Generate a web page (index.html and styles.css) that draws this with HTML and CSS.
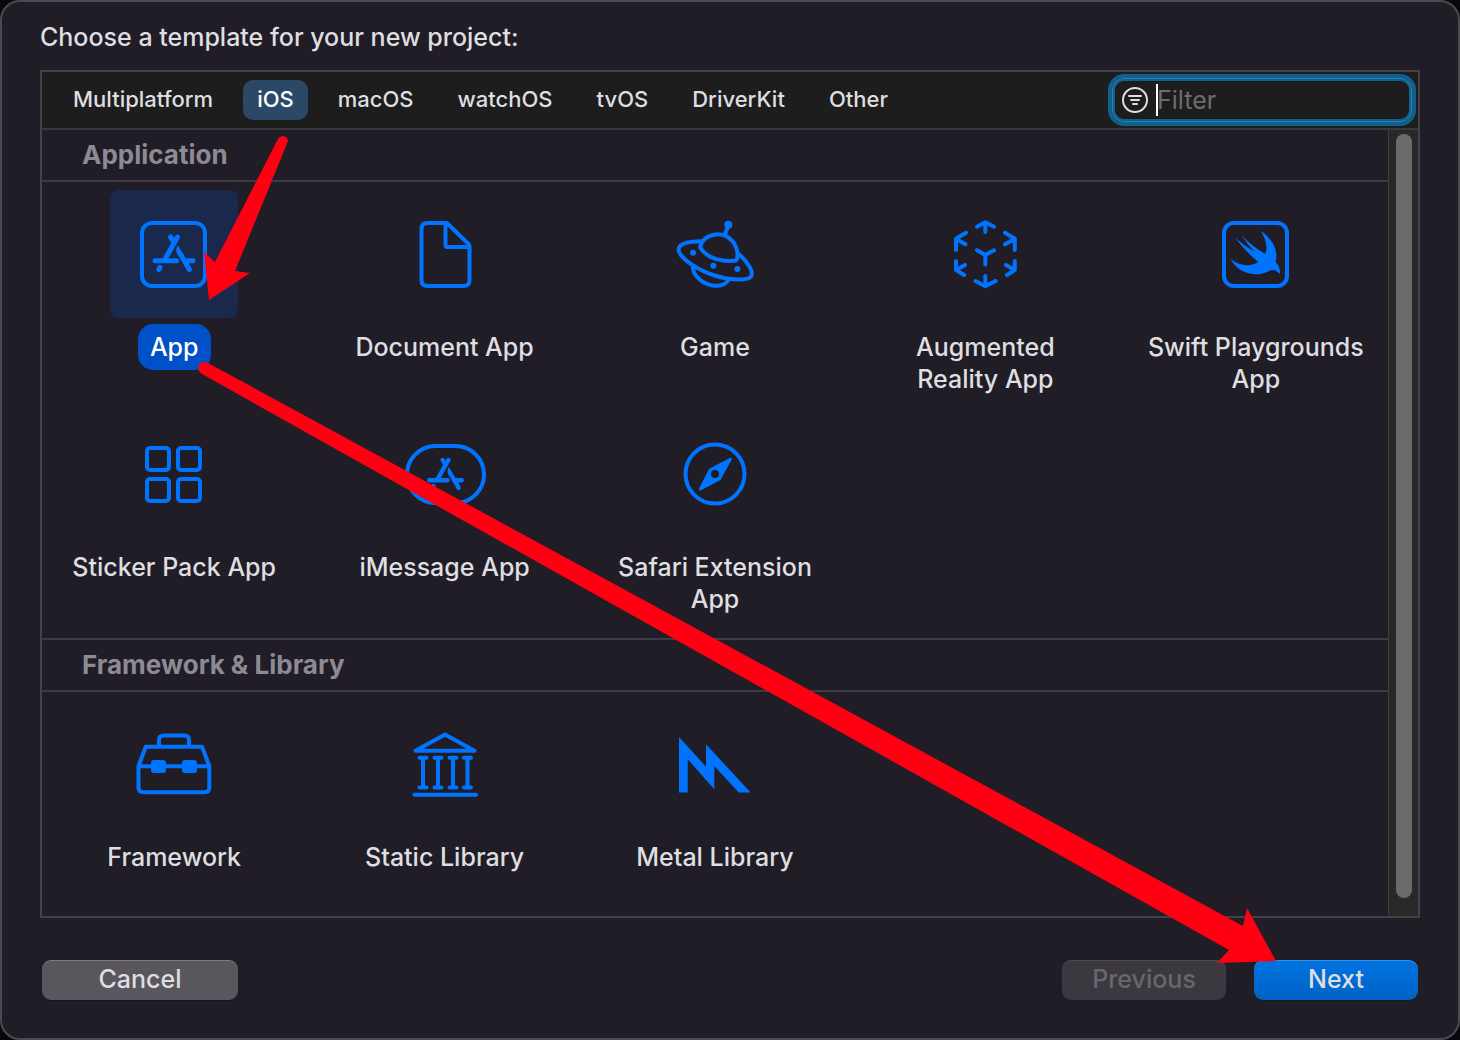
FILE: index.html
```html
<!DOCTYPE html>
<html lang="en">
<head>
<meta charset="utf-8">
<title>Choose a template</title>
<link rel="stylesheet" href="styles.css">
</head>
<body>
<svg class="defs" aria-hidden="true">
  <symbol id="store-mark" viewBox="0 0 128 128">
    <g fill="none" stroke="currentColor" stroke-width="5" stroke-linecap="round">
      <path d="M67.500 47L54.500 70M60.500 47L63 51M45 70.700H66.500M77 70.700H83M50 77.500L48.800 79.500M71.500 66L79.300 79.500"/>
    </g>
    <path fill="currentColor" d="M68 55.500C66 57 66 61 67 63.500L69.300 67.300L73.700 64.800Z"/>
  </symbol>
</svg>
<main class="dialog">
  <h1 class="title">Choose a template for your new project:</h1>
  <section class="panel">
    <header class="toolbar">
      <nav class="tabs" aria-label="Platform">
        <button class="tab" type="button">Multiplatform</button>
        <button class="tab tab-active" type="button">iOS</button>
        <button class="tab" type="button">macOS</button>
        <button class="tab" type="button">watchOS</button>
        <button class="tab" type="button">tvOS</button>
        <button class="tab" type="button">DriverKit</button>
        <button class="tab" type="button">Other</button>
      </nav>
      <label class="filter">
        <svg class="filter-icon" viewBox="0 0 28 28" fill="none" stroke="currentColor" stroke-width="2" stroke-linecap="round" aria-hidden="true">
          <circle cx="14" cy="14" r="12"/><path d="M8 10H20M10 14H18M12 18H16"/>
        </svg>
        <span class="caret"></span>
        <input class="filter-input" type="text" placeholder="Filter" aria-label="Filter">
      </label>
    </header>
    <div class="body">
      <div class="list">
        <h2 class="heading">Application</h2>
        <div class="grid">
          <button class="tile tile-selected" type="button">
            <svg class="art" viewBox="0 0 128 128" aria-hidden="true"><rect x="32" y="33" width="63" height="63" rx="10"/><use href="#store-mark"/></svg>
            <span class="label">App</span>
          </button>
          <button class="tile" type="button">
            <svg class="art" viewBox="0 0 128 128" aria-hidden="true"><path d="M65 33H46.500Q40.500 33 40.500 39V90Q40.500 96 46.500 96H82.500Q88.500 96 88.500 90V56Q88.500 55 87.500 54L67 34Q66 33 65 33ZM64.500 34V55Q64.500 57 66.500 57H88"/></svg>
            <span class="label">Document App</span>
          </button>
          <button class="tile" type="button">
            <svg class="art" viewBox="0 0 128 128" aria-hidden="true">
              <path d="M50.500 51.300C38 51.300 27.500 53 27.500 60C29 68 44 78.500 62 85C80 91 97 90.500 100 86.500C103.500 82 95 69.500 87 63.500"/>
              <path d="M49.500 55.500C52 48 60 44.300 67 44.300C77 44.300 86 53 86.500 64Q86.500 70 85 70.500C73 72 57 69.500 49.500 58Q48.800 57 49.500 55.500Z"/>
              <path d="M41.800 76.500C42 87 54 96 66 95.800Q74 95.500 77.500 90M74 44.500L77 36"/>
              <g class="solid"><circle cx="77.300" cy="34.700" r="4"/><circle cx="42" cy="62.700" r="3"/><circle cx="62.400" cy="75.700" r="3"/><circle cx="86.400" cy="79" r="3"/></g>
            </svg>
            <span class="label">Game</span>
          </button>
          <button class="tile" type="button">
            <svg class="art" viewBox="0 0 128 128" aria-hidden="true"><path d="M56 36.700L64.300 32.300L73 36.700M64.300 33V42M56 60.300L64.300 65L73 60.300M64.300 65V74.500M54.500 91L64.300 96.300L74.500 91M64.300 86V96M45 42.700L35 48.700V60M44.500 54.300L35 49M84 42.700L93.800 48.700V60M84 54.300L93.800 49M35 71V80L43.200 85M44 75L35 80M93.800 71V80L86 85M85 75L93.800 80"/></svg>
            <span class="label">Augmented Reality App</span>
          </button>
          <button class="tile" type="button">
            <svg class="art" viewBox="0 0 128 128" aria-hidden="true"><rect x="32" y="33" width="63" height="63" rx="10"/><path class="solid" d="M68.700 40.700C81 49 87 62 83.500 71.500C88 77 88.500 81 87.700 84C84 79.500 80 79 76 81.500C63 88 46 83 38.700 69.300C48 76 58 77 66.300 72C58 65 50 57.500 43 47.300Q52 56 62.500 61.500Q55 54 49.300 44.700C57 53 65 59.500 73.500 64C76 57 73.500 48 68.700 40.700Z"/></svg>
            <span class="label">Swift Playgrounds App</span>
          </button>
          <button class="tile" type="button">
            <svg class="art" viewBox="0 0 128 128" aria-hidden="true"><rect x="37" y="38" width="22" height="22" rx="3"/><rect x="68" y="38" width="22" height="22" rx="3"/><rect x="37" y="69" width="22" height="22" rx="3"/><rect x="68" y="69" width="22" height="22" rx="3"/></svg>
            <span class="label">Sticker Pack App</span>
          </button>
          <button class="tile" type="button">
            <svg class="art" viewBox="0 0 128 128" aria-hidden="true"><rect x="26" y="36" width="77" height="57" rx="28.500"/><use href="#store-mark" x="9.500" y="9.500" width="110" height="110"/></svg>
            <span class="label">iMessage App</span>
          </button>
          <button class="tile" type="button">
            <svg class="art" viewBox="0 0 128 128" aria-hidden="true"><circle cx="64" cy="64" r="29.500"/><path class="solid" fill-rule="evenodd" d="M79 48Q81.500 47 80.500 50L70 69Q69.500 70 68.500 70.500L49.500 80.500Q47 81 48 78.500L57.500 60Q58 59 59 58.300ZM64 60A4 4 0 1 0 64 68A4 4 0 1 0 64 60Z"/></svg>
            <span class="label">Safari Extension App</span>
          </button>
        </div>
        <h2 class="heading heading-next">Framework &amp; Library</h2>
        <div class="grid">
          <button class="tile" type="button">
            <svg class="art" viewBox="0 0 128 128" aria-hidden="true"><path d="M28.500 66L35.800 46.700H92L99.300 66V87.500Q99.300 92.300 94.500 92.300H33.300Q28.500 92.300 28.500 87.500ZM29 66.300H99M49 46V40Q49 35.500 53.500 35.500H74.500Q79 35.500 79 40V46"/><g class="solid"><rect x="41" y="60" width="15" height="13" rx="3"/><rect x="72" y="60" width="15" height="13" rx="3"/></g></svg>
            <span class="label">Framework</span>
          </button>
          <button class="tile" type="button">
            <svg class="art" viewBox="0 0 128 128" aria-hidden="true"><path d="M34.500 50.800L64 34.500L93.500 50.800ZM38.500 57.800H45.500M53.500 57.800H60.500M68.500 57.800H75.500M83 57.800H90M38.500 87.600H45.500M53.500 87.600H60.500M68.500 87.600H75.500M83 87.600H90M42 58V87M57 58V87M72 58V87M86.500 58V87M33.500 94.700H95"/></svg>
            <span class="label">Static Library</span>
          </button>
          <button class="tile" type="button">
            <svg class="art" viewBox="0 0 128 128" aria-hidden="true"><path class="solid" d="M28 37L55 66.700V44.300L99.700 92.500H87.700L63.300 66V89.300L36.700 59.300V92.500H28Z"/></svg>
            <span class="label">Metal Library</span>
          </button>
        </div>
      </div>
      <div class="scrollbar"><div class="thumb"></div></div>
    </div>
  </section>
  <footer class="actions">
    <button class="action action-cancel" type="button">Cancel</button>
    <button class="action action-previous" type="button" disabled>Previous</button>
    <button class="action action-next" type="button">Next</button>
  </footer>
  <svg class="arrows" width="1460" height="1040" viewBox="0 0 1460 1040" aria-hidden="true">
    <path d="M278 139C280 135 288 135 288 141L235 271L250 273L209 300L204 252L215 262Z"/>
    <path d="M208 363L1243 926L1247 908L1276 961L1217 963L1229 950L202 374C194 369 200 359 208 363Z"/>
  </svg>
</main>
</body>
</html>
```
FILE: styles.css
```css
* {
  box-sizing: border-box;
}

body {
  margin: 0;
  background: #08070a;
  color: #dfdee0;
  font-family: Inter, "Liberation Sans", sans-serif;
  font-size: 25px;
  font-weight: 500;
  line-height: 32px;
}

button,
input {
  margin: 0;
  padding: 0;
  border: 0;
  background: none;
  color: inherit;
  font: inherit;
}

.defs {
  display: none;
}

.dialog {
  position: relative;
  display: flex;
  flex-direction: column;
  min-height: 100vh;
  padding: 19px 38px 38px;
  overflow: hidden;
  border: 2px solid #4c4a50;
  border-radius: 20px;
  background: #201d26;
}

.title {
  margin: 0 0 17px;
  font-size: 25px;
  font-weight: 500;
}

.panel {
  display: flex;
  flex: 1;
  flex-direction: column;
  border: 2px solid #434246;
}

.toolbar {
  display: flex;
  align-items: center;
  justify-content: space-between;
  height: 58px;
  padding: 0 2px 0 17px;
  border-bottom: 2px solid #38373a;
  background: #1d1d1d;
}

.tabs {
  display: flex;
  gap: 16px;
}

.tab {
  height: 40px;
  padding: 0 14px 2px;
  border-radius: 10px;
  font-size: 22px;
}

.tab-active {
  background: #2b4866;
  color: #fff;
}

.filter {
  display: flex;
  align-items: center;
  width: 308px;
  height: 52px;
  padding-left: 9px;
  border: 4px solid #10608f;
  border-radius: 16px;
  background: #1d1d1d;
  box-shadow: inset 0 0 0 1px #2f7fb0, inset 0 0 0 3px #10608f;
}

.filter-icon {
  flex: none;
  width: 28px;
  height: 28px;
}

.caret {
  flex: none;
  width: 2px;
  height: 32px;
  margin-left: 7px;
  background: #fff;
}

.filter-input {
  flex: 1;
  min-width: 0;
  height: 32px;
  margin-left: -1px;
  outline: 0;
  font-weight: 400;
}

.filter-input::placeholder {
  color: #6c6c6c;
  opacity: 1;
}

.body {
  display: flex;
  flex: 1;
}

.list {
  flex: 1;
}

.heading {
  margin: 0;
  padding: 9px 40px;
  border-bottom: 2px solid #3d3b43;
  color: #8d8a94;
  font-size: 26px;
  font-weight: 700;
}

.heading-next {
  border-top: 2px solid #3d3b43;
}

.grid {
  display: grid;
  grid-template-columns: repeat(5, 1fr);
  gap: 8px 48px;
  padding: 8px 21px 16px;
}

.tile {
  display: flex;
  flex-direction: column;
  align-items: center;
  gap: 6px;
}

.art {
  width: 128px;
  height: 128px;
  border-radius: 8px;
  color: #0074ff;
  fill: none;
  stroke: currentColor;
  stroke-width: 4;
  stroke-linecap: round;
  stroke-linejoin: round;
}

.art use,
.solid {
  stroke: none;
}

.solid {
  fill: currentColor;
}

.label {
  padding: 7px 0;
  border-radius: 15px;
}

.tile-selected .art {
  background: #1a294b;
}

.tile-selected .label {
  padding: 7px 12px;
  background: #0050c8;
  color: #fff;
}

.scrollbar {
  width: 30px;
  padding: 4px 6px 18px 7px;
  border-left: 1px solid #3d3c3f;
  background: #282828;
}

.thumb {
  width: 16px;
  height: 100%;
  border-radius: 8px;
  background: #6b6b6b;
}

.actions {
  display: flex;
  gap: 28px;
  margin-top: 42px;
  padding: 0 2px;
}

.action {
  width: 164px;
  height: 40px;
  padding-bottom: 2px;
  border-radius: 9px;
  box-shadow: inset 0 1px #ffffff33, 0 1px 1px #00000040;
}

.action-cancel {
  width: 196px;
  margin-right: auto;
  background: #59565d;
}

.action-previous {
  background: #3b3840;
  color: #69666e;
  box-shadow: inset 0 1px #ffffff18;
}

.action-next {
  background: linear-gradient(#0074e2, #0062c4);
}

.arrows {
  position: absolute;
  top: -2px;
  left: -2px;
  fill: #ff0013;
  pointer-events: none;
}
```
